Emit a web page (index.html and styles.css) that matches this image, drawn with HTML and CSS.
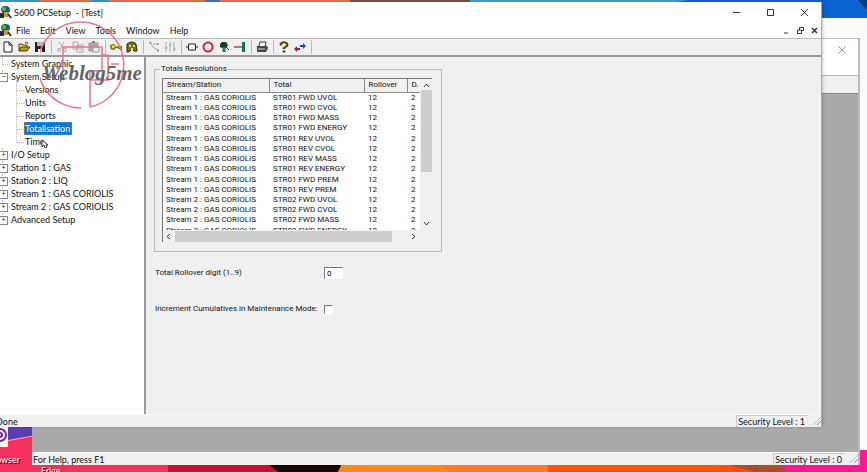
FILE: index.html
```
<!DOCTYPE html>
<html lang="en">
<head>
<meta charset="utf-8">
<title>S600 PCSetup - [Test]</title>
<link rel="stylesheet" href="styles.css">
</head>
<body>
<div class="desktop">
  <svg class="wallpaper" viewBox="0 0 867 472" preserveAspectRatio="none" aria-hidden="true">
    <rect width="867" height="472" fill="#f7305e"/>
    <path d="M0 0H190V3H0Z" fill="#3a9ad0"/><path d="M40 0h50v3h-50zM110 0H350V3H110Z" fill="#e8753c"/><path d="M205 0h15v3h-15z" fill="#4a70c8"/><path d="M350 0H470V3H350Z" fill="#75504a"/>
    <path d="M470 0H867V20H470Z" fill="#0a62d0"/><path d="M470 0h220l-20 3H470z" fill="#3a9fe0"/><path d="M858 0h9v10z" fill="#0a3a80"/>
    <path d="M0 425H33V436L0 442Z" fill="#5a3fb0"/><path d="M0 442L33 436" stroke="#f3a0d0"/>
    <path d="M33 464H180V472H20Z" fill="#f7305e"/><path d="M168 464H270L280 472H168Z" fill="#c80f35"/>
    <path d="M268 464H342L338 472H278Z" fill="#150806"/><path d="M342 464H550V472H338Z" fill="#ff8a1a"/><path d="M440 464H550V472H450Z" fill="#ff7a30"/>
    <path d="M548 464H740L790 472H548Z" fill="#ff5208"/><path d="M725 464H780L790 472H755Z" fill="#a5502e"/><path d="M778 464L860 450H867V472H788Z" fill="#ff1796"/>
  </svg>
  <div class="shortcut"><svg width="8" height="22" viewBox="0 0 8 22" aria-hidden="true"><rect width="8" height="22" fill="#fff"/><g fill="none" stroke="#6b259e" stroke-width="2"><circle cx="0" cy="10" r="6"/><circle cx="0" cy="10" r="2"/></g></svg><span>owser</span></div>
  <span class="edge-label">Edge</span>
  <div class="browser-window"></div>

  <section class="window back-window" aria-label="PCSetup">
    <header class="back-title"><button class="back-close" aria-label="Close"><svg width="8" height="8" viewBox="0 0 8 8"><path d="M.5 .5l7 7M7.5 .5l-7 7" stroke="#999" fill="none"/></svg></button></header>
    <div class="back-tools"></div>
    <div class="back-client"></div>
    <footer class="status"><span>For Help, press F1</span><span class="level">Security Level : 0</span><span class="grip"></span></footer>
  </section>

  <main class="window front-window">
    <header class="titlebar">
      <svg class="app-icon" width="12" height="14" viewBox="0 0 12 14"><path d="M1 5Q1 1 5 1Q10 1 10 5L8 9H3Z" fill="#17643c"/><circle cx="4" cy="4" r="2" fill="#4bb875"/><path d="M4 7h4v5H4z" fill="#d89422"/><path d="M0 9h3v3H0zM8 9l3 4" stroke="#27333b" stroke-width="2"/><path d="M7 4h3v3H7z" fill="#2660a0"/></svg>
      <h1>S600 PCSetup&nbsp; - [Test]</h1>
      <div class="caption">
        <button aria-label="Minimize"><svg width="9" height="9" viewBox="0 0 9 9"><path d="M1 4.5h7"/></svg></button>
        <button aria-label="Maximize"><svg width="9" height="9" viewBox="0 0 9 9"><path d="M1.500 1.500h6v6h-6z"/></svg></button>
        <button aria-label="Close"><svg width="9" height="9" viewBox="0 0 9 9"><path d="M1 1l7 7M8 1l-7 7"/></svg></button>
      </div>
    </header>
    <nav class="menubar">
      <svg class="app-icon" width="12" height="14" viewBox="0 0 12 14"><path d="M1 5Q1 1 5 1Q10 1 10 5L8 9H3Z" fill="#17643c"/><circle cx="4" cy="4" r="2" fill="#4bb875"/><path d="M4 7h4v5H4z" fill="#d89422"/><path d="M0 9h3v3H0zM8 9l3 4" stroke="#27333b" stroke-width="2"/><path d="M7 4h3v3H7z" fill="#2660a0"/></svg>
      <button>File</button><button>Edit</button><button>View</button><button>Tools</button><button>Window</button><button>Help</button>
      <div class="mdi">
        <button aria-label="Minimize document"><svg width="7" height="7" viewBox="0 0 7 7"><path d="M1 6h4"/></svg></button>
        <button aria-label="Restore document"><svg width="7" height="7" viewBox="0 0 7 7"><path d="M2.500 3V.5h4v3H5M.5 3h4v3.500h-4z"/></svg></button>
        <button aria-label="Close document"><svg width="7" height="7" viewBox="0 0 7 7"><path d="M1 1l5 5M6 1L1 6" stroke-width="1.500"/></svg></button>
      </div>
    </nav>
    <div class="toolbar" role="toolbar" aria-label="Standard">
      <button aria-label="New"><svg viewBox="0 0 12 12"><path d="M2 1h5l3 3v7H2zM7 1v3h3" fill="#fff" stroke="#222"/></svg></button>
      <button aria-label="Open"><svg viewBox="0 0 12 12"><path d="M1 10V3h3l1 1h4v2" fill="#f2e65c" stroke="#443f10"/><path d="M1 10l2-4h9l-3 4z" fill="#b5a400" stroke="#443f10"/><path d="M7 2q2-2 3 1" fill="none" stroke="#222"/></svg></button>
      <button aria-label="Save"><svg viewBox="0 0 12 12"><path d="M1 1h10v10H1z" fill="#222"/><path d="M3 1h6v4H3z" fill="#bbb"/><path d="M4 8h4v3H4z" fill="#eee"/></svg></button>
      <i class="sep"></i>
      <button aria-label="Cut" disabled><svg viewBox="0 0 12 12"><path d="M3 1l5 7M8 1L4 8" fill="none" stroke="#aaa"/><circle cx="3" cy="9" r="1.500" fill="none" stroke="#aaa"/><circle cx="9" cy="9" r="1.500" fill="none" stroke="#aaa"/></svg></button>
      <button aria-label="Copy" disabled><svg viewBox="0 0 12 12"><path d="M1 1h5v7H1zM5 4h6v7H5z" fill="#eee" stroke="#aaa"/><path d="M7 6h3M7 8h3" stroke="#aaa"/></svg></button>
      <button aria-label="Paste" disabled><svg viewBox="0 0 12 12"><path d="M1 2h9v8H1z" fill="#aaa" stroke="#999"/><path d="M5 6h6v5H5z" fill="#eee" stroke="#999"/><path d="M4 1h3" stroke="#888" stroke-width="2"/></svg></button>
      <i class="sep"></i>
      <button aria-label="Security"><svg viewBox="0 0 12 12"><path d="M5 6h6v3M9 6v2" fill="none" stroke="#75700b" stroke-width="2"/><circle cx="3" cy="6" r="2" fill="none" stroke="#908709" stroke-width="2"/><path d="M2 5h9" stroke="#e9df37"/></svg></button>
      <button aria-label="Users"><svg viewBox="0 0 12 12"><path d="M1 3q5-4 9 0l1 7H8L6 8l-3 3H1z" fill="#76711b" stroke="#222"/><path d="M3 5h2M7 5h2M5 8h2" stroke="#e7e13c" stroke-width="2"/></svg></button>
      <i class="sep"></i>
      <button aria-label="Connections" disabled><svg viewBox="0 0 12 12"><path d="M1 2h3M3 3l3 4 4 2M5 3h6" fill="none" stroke="#aaa"/><path d="M1 1h2v2H1zM9 2h2v2H9zM9 8h2v3H9z" fill="#aaa"/></svg></button>
      <button aria-label="Levels" disabled><svg viewBox="0 0 12 12"><path d="M2 1v10M6 1v10M10 1v10M1 7h3M5 4h3M9 8h3" stroke="#aaa"/></svg></button>
      <i class="sep"></i>
      <button aria-label="Block"><svg viewBox="0 0 12 12"><path d="M2.500 3h7v6h-7z" fill="#fff" stroke="#222"/><path d="M0 6h3M9 6h3" stroke="#222"/></svg></button>
      <button aria-label="Stop"><svg viewBox="0 0 12 12"><circle cx="6" cy="6" r="4.500" fill="#fff" stroke="#d92035" stroke-width="2"/></svg></button>
      <button aria-label="Find"><svg viewBox="0 0 12 12"><path d="M2 3l2-2h4l2 3-2 3H4L2 6z" fill="#173d1d"/><path d="M6 6v5" stroke="#267c40" stroke-width="3"/><path d="M8 6l3 3" stroke="#222"/></svg></button>
      <button aria-label="Exit"><svg viewBox="0 0 12 12"><path d="M0 6h8" stroke="#d3344b" stroke-width="1.500"/><path d="M8 1h3v10H8z" fill="#13725c"/></svg></button>
      <i class="sep"></i>
      <button aria-label="Print"><svg viewBox="0 0 12 12"><path d="M3 5l1-4h6L9 5" fill="#fff" stroke="#333"/><path d="M1 5h10l1 2-2 4H1z" fill="#444"/><path d="M2 8h7" stroke="#ddd"/></svg></button>
      <i class="sep"></i>
      <button aria-label="Help"><svg viewBox="0 0 12 12"><path d="M3 4.500V3Q6 0 9 3v1.500L6 7v1M6 9.500v2" fill="none" stroke="#3d390a" stroke-width="2.500"/><path d="M3.500 3.500Q6 1 8.500 3.500L6 6.500" fill="none" stroke="#e3d925"/></svg></button>
      <button aria-label="Transfer"><svg viewBox="0 0 12 12"><path d="M0 8l3-3v2h3v2H3v2z" fill="#a51b2b"/><path d="M12 5L9 2v2H6v2h3v2z" fill="#1646cc"/></svg></button>
      <i class="sep"></i>
    </div>
    <div class="workspace">
      <ul class="tree">
        <li><a href="#">System Graphic</a></li>
        <li class="branch open"><a href="#">System Setup</a>
          <ul><li><a href="#">Versions</a></li><li><a href="#">Units</a></li><li><a href="#">Reports</a></li><li><a href="#" class="selected">Totalisation</a></li><li><a href="#">Time</a></li></ul>
        </li>
        <li class="branch"><a href="#">I/O Setup</a></li>
        <li class="branch"><a href="#">Station 1 : GAS</a></li>
        <li class="branch"><a href="#">Station 2 : LIQ</a></li>
        <li class="branch"><a href="#">Stream 1 : GAS CORIOLIS</a></li>
        <li class="branch"><a href="#">Stream 2 : GAS CORIOLIS</a></li>
        <li class="branch"><a href="#">Advanced Setup</a></li>
      </ul>
      <form class="page">
        <fieldset>
          <legend>Totals Resolutions</legend>
          <div class="listview">
            <div class="list-body">
              <table>
                <colgroup><col class="c-stream"><col class="c-total"><col class="c-roll"><col></colgroup>
                <thead><tr><th>Stream/Station</th><th>Total</th><th>Rollover</th><th>D.</th></tr></thead>
                <tbody>
                <tr><td>Stream 1 : GAS CORIOLIS</td><td>STR01 FWD UVOL</td><td>12</td><td>2</td></tr>
                <tr><td>Stream 1 : GAS CORIOLIS</td><td>STR01 FWD CVOL</td><td>12</td><td>2</td></tr>
                <tr><td>Stream 1 : GAS CORIOLIS</td><td>STR01 FWD MASS</td><td>12</td><td>2</td></tr>
                <tr><td>Stream 1 : GAS CORIOLIS</td><td>STR01 FWD ENERGY</td><td>12</td><td>2</td></tr>
                <tr><td>Stream 1 : GAS CORIOLIS</td><td>STR01 REV UVOL</td><td>12</td><td>2</td></tr>
                <tr><td>Stream 1 : GAS CORIOLIS</td><td>STR01 REV CVOL</td><td>12</td><td>2</td></tr>
                <tr><td>Stream 1 : GAS CORIOLIS</td><td>STR01 REV MASS</td><td>12</td><td>2</td></tr>
                <tr><td>Stream 1 : GAS CORIOLIS</td><td>STR01 REV ENERGY</td><td>12</td><td>2</td></tr>
                <tr><td>Stream 1 : GAS CORIOLIS</td><td>STR01 FWD PREM</td><td>12</td><td>2</td></tr>
                <tr><td>Stream 1 : GAS CORIOLIS</td><td>STR01 REV PREM</td><td>12</td><td>2</td></tr>
                <tr><td>Stream 2 : GAS CORIOLIS</td><td>STR02 FWD UVOL</td><td>12</td><td>2</td></tr>
                <tr><td>Stream 2 : GAS CORIOLIS</td><td>STR02 FWD CVOL</td><td>12</td><td>2</td></tr>
                <tr><td>Stream 2 : GAS CORIOLIS</td><td>STR02 FWD MASS</td><td>12</td><td>2</td></tr>
                <tr><td>Stream 2 : GAS CORIOLIS</td><td>STR02 FWD ENERGY</td><td>12</td><td>2</td></tr>
                </tbody>
              </table>
            </div>
            <div class="vbar"><svg width="7" height="5" viewBox="0 0 7 5"><path d="M1 4l2.500-3L6 4"/></svg><i></i><svg width="7" height="5" viewBox="0 0 7 5"><path d="M1 1l2.500 3L6 1"/></svg></div>
            <div class="hbar"><svg width="5" height="7" viewBox="0 0 5 7"><path d="M4 1L1 3.500 4 6"/></svg><i></i><svg width="5" height="7" viewBox="0 0 5 7"><path d="M1 1l3 2.500L1 6"/></svg></div>
          </div>
        </fieldset>
        <div class="field"><label for="digit">Total Rollover digit (1..9)</label><input id="digit" type="text" value="0"></div>
        <div class="field"><label for="incr">Increment Cumulatives in Maintenance Mode:</label><input id="incr" type="checkbox"></div>
      </form>
    </div>
    <footer class="status"><span class="done">Done</span><span class="level">Security Level : 1</span><span class="grip"></span></footer>
  </main>

  <div class="watermark">
    <svg width="88" height="90" viewBox="0 0 88 90" aria-hidden="true"><g fill="none" stroke="#e8758f" stroke-width="1.500"><path d="M41 88A43 43 0 1 1 50 87"/><path d="M23 52V27h39v24H50v36M62 35h6v25H50M71 44h8"/></g></svg>
    <span>Weblog5me</span>
  </div>
  <svg class="pointer" width="8" height="10" viewBox="0 0 8 10" aria-hidden="true"><path d="M1 1v7l2-2 1 3 2-1-1-2h2z" fill="#fff" stroke="#333"/></svg>
</div>
</body>
</html>
```
FILE: styles.css
```
* { box-sizing: border-box; }
body { margin: 0; font: 9px/13px Lato, "Open Sans", sans-serif; color: #111; }
button { border: 0; padding: 0; background: none; font: inherit; color: inherit; display: flex; align-items: center; justify-content: center; }
a { color: inherit; text-decoration: none; }
ul { list-style: none; margin: 0; padding: 0; }
.desktop { position: relative; height: 100vh; overflow: hidden; }
.wallpaper { position: absolute; width: 100%; height: 100%; }
.shortcut { position: absolute; left: 0; top: 425px; color: #fff; text-shadow: 1px 1px 1px #000; }
.shortcut svg { display: block; }
.shortcut span { display: block; margin: 6px 0 0 -4px; }
.edge-label { position: absolute; left: 41px; top: 464px; color: #fff; text-shadow: 1px 1px 1px #000; }
.browser-window { position: absolute; left: 560px; right: 0; top: 18px; bottom: 22px; background: #fbfbfb; }
.window { position: absolute; display: flex; flex-direction: column; background: #f0f0f0; }
.back-window { left: 32px; right: 7px; top: 38px; bottom: 7px; border: 1px solid #bbb; border-width: 1px 2px 0 0; }
.back-title { height: 37px; background: #fff; border-bottom: 1px solid #bbb; display: flex; justify-content: flex-end; align-items: flex-start; padding: 7px 12px; }
.back-tools { height: 18px; border-bottom: 1px solid #888; }
.back-client { flex: 1; background: #aaa; }
.front-window { left: 0; right: 45px; top: 2px; bottom: 45px; border-right: 1px solid #aaa; box-shadow: 1px 0 3px #0003; }
.titlebar, .menubar { display: flex; align-items: center; background: #fff; }
.titlebar { height: 20px; }
.app-icon { flex: none; }
h1 { margin: 0 0 0 2px; font-size: 9px; font-weight: 400; }
.caption { display: flex; margin-left: auto; }
.caption button { width: 34px; }
.caption svg, .mdi svg { fill: none; stroke: #333; }
.menubar { height: 16px; gap: 10px; }
.menubar .app-icon { margin-right: -6px; }
.mdi { display: flex; margin-left: auto; }
.mdi button { width: 14px; }
.toolbar { height: 19px; display: flex; align-items: center; gap: 2px; border-top: 1px solid #bbb; border-bottom: 2px solid #999; padding-left: 1px; }
.toolbar button { width: 14px; height: 14px; }
.toolbar svg { width: 12px; height: 12px; }
.sep { width: 1px; height: 14px; margin: 0 1px 0 2px; background: #bbb; }
.workspace { flex: 1; display: flex; min-height: 0; }
.tree { width: 146px; background: #fff; border-right: 2px solid #999; }
.tree li { position: relative; padding-left: 10px; }
.tree li::before { content: ""; position: absolute; left: 2px; top: 0; width: 7px; height: 7px; border: dotted #bbb; border-width: 0 0 1px 1px; }
.tree li li { padding-left: 14px; }
.tree li li::before { left: 6px; width: 7px; height: 13px; top: -6px; }
.tree a { display: inline-block; padding: 0 1px; }
.tree a.selected { background: #0875d1; color: #fff; padding-right: 2px; outline: 1px dotted #c08030; outline-offset: -1px; }
.tree .branch::after { content: "+"; position: absolute; left: -1px; top: 3px; width: 7px; height: 7px; border: 1px solid #888; background: #fff; font: 7px/5px "Liberation Sans", sans-serif; text-align: center; }
.tree .open::after { content: "−"; }
.page { flex: 1; padding: 6px 8px; font: 8px/10px Roboto, "Liberation Sans", sans-serif; }
fieldset { width: 288px; margin: 0 0 15px; border: 1px solid #bbb; padding: 3px 9px 9px 7px; }
legend { padding: 0 1px; margin-left: -2px; line-height: 12px; }
.listview { display: grid; grid-template-columns: 1fr 12px; grid-template-rows: 151px 12px; border: 1px solid #777; border-width: 1px 0 0 1px; }
.list-body { overflow: hidden; background: #fff; }
table { width: 100%; height: 157px; border-collapse: collapse; table-layout: fixed; }
.c-stream { width: 106px; } .c-total { width: 95px; } .c-roll { width: 43px; }
th { height: 13px; padding: 0 4px; background: #f0f0f0; font-weight: 400; text-align: left; border: solid #888; border-width: 0 1px 1px 0; }
th:last-child { border-right: 0; }
td { padding: 0 3px; white-space: nowrap; }
td + td { padding-left: 4px; }
.vbar, .hbar { display: flex; align-items: center; justify-content: space-between; }
.vbar { flex-direction: column; padding: 4px 0; }
.vbar svg, .hbar svg { fill: none; stroke: #333; flex: none; }
.vbar i { width: 11px; height: 82px; background: #cdcdcd; margin: 2px 0 auto; }
.hbar { grid-column: 1; padding: 0 4px 0 3px; }
.hbar i { width: 217px; height: 11px; background: #cdcdcd; margin: 0 auto 0 4px; }
.field { display: flex; align-items: center; height: 12px; margin: 0 0 24px 1px; }
.field label { width: 169px; white-space: nowrap; }
input { margin: 0; border: 1px solid #777; border-color: #777 #fff #fff #777; background: #fff; }
input[type=text] { width: 19px; height: 12px; padding: 0 2px; font: inherit; }
input[type=checkbox] { appearance: none; width: 9px; height: 9px; }
.status { height: 13px; display: flex; align-items: center; white-space: nowrap; background: #f0f0f0; border-top: 1px solid #fafafa; padding-left: 1px; }
.done { margin-left: -5px; }
.level { margin-left: auto; border: 1px solid #ccc; border-width: 1px 0 0 1px; line-height: 11px; padding: 0 3px 0 1px; }
.grip { width: 8px; height: 8px; margin-left: 5px; background: repeating-linear-gradient(135deg, #eee 0 2px, #999 2px 3px); clip-path: polygon(100% 0, 100% 100%, 0 100%); }
.watermark { position: absolute; left: 40px; top: 20px; pointer-events: none; }
.watermark svg { display: block; }
.watermark span { position: absolute; left: 2px; top: 41px; font: italic 700 21px/24px "Liberation Serif", serif; color: #666; }
.pointer { position: absolute; left: 41px; top: 139px; }
```
